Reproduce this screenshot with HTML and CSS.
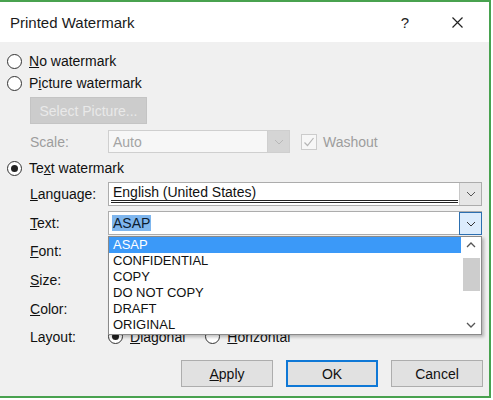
FILE: index.html
```html
<!DOCTYPE html>
<html>
<head>
<meta charset="utf-8">
<link rel="stylesheet" href="styles.css">
</head>
<body>
<div class="dialog">
  <div class="titlebar">
    <span class="title">Printed Watermark</span>
    <span class="help">?</span>
    <svg class="close" width="11" height="11" viewBox="0 0 11 11"><path d="M0.5 0.5 L10.5 10.5 M10.5 0.5 L0.5 10.5" stroke="#222" stroke-width="1.2" fill="none"/></svg>
  </div>
  <div class="content">
    <div class="radio-row r-first">
      <span class="radio"></span><span class="rtext"><u>N</u>o watermark</span>
    </div>
    <div class="radio-row">
      <span class="radio"></span><span class="rtext">P<u>i</u>cture watermark</span>
    </div>
    <div class="pic-row">
      <div class="btn-disabled">Select Picture...</div>
    </div>
    <div class="row r-scale">
      <span class="lbl disabled">Scale:</span>
      <div class="combo combo-disabled">
        <span class="field">Auto</span>
        <span class="dd dd-disabled"><svg width="10" height="6" viewBox="0 0 10 6"><path d="M1 1 L5 5 L9 1" stroke="#b8b8b8" fill="none"/></svg></span>
      </div>
      <span class="check"><svg width="14" height="14" viewBox="0 0 14 14"><path d="M2.5 7.5 L5.5 10.5 L11.5 3" stroke="#b5b5b5" stroke-width="1.2" fill="none"/></svg></span>
      <span class="disabled washout">Washout</span>
    </div>
    <div class="radio-row r-text">
      <span class="radio checked"></span><span class="rtext">Te<u>x</u>t watermark</span>
    </div>
    <div class="row r-lang">
      <span class="lbl"><u>L</u>anguage:</span>
      <div class="combo">
        <span class="field lang"><span class="langtext">English (United States)</span></span>
        <span class="dd"><svg width="10" height="6" viewBox="0 0 10 6"><path d="M1 1 L5 5 L9 1" stroke="#555" fill="none"/></svg></span>
      </div>
    </div>
    <div class="row r-textcombo">
      <span class="lbl"><u>T</u>ext:</span>
      <div class="combo combo-open">
        <span class="field"><span class="sel">ASAP</span></span>
        <span class="dd dd-active"><svg width="10" height="6" viewBox="0 0 10 6"><path d="M1 1 L5 5 L9 1" stroke="#333" fill="none"/></svg></span>
        <div class="list">
          <div class="items">
            <div class="item active">ASAP</div>
            <div class="item">CONFIDENTIAL</div>
            <div class="item">COPY</div>
            <div class="item">DO NOT COPY</div>
            <div class="item">DRAFT</div>
            <div class="item">ORIGINAL</div>
          </div>
          <div class="scroll">
            <svg class="arr" width="10" height="6" viewBox="0 0 10 6"><path d="M1 5 L5 1 L9 5" stroke="#555" stroke-width="1.3" fill="none"/></svg>
            <div class="thumb"></div>
            <div class="spacer"></div>
            <svg class="arr" width="10" height="6" viewBox="0 0 10 6"><path d="M1 1 L5 5 L9 1" stroke="#555" stroke-width="1.3" fill="none"/></svg>
          </div>
        </div>
      </div>
    </div>
    <div class="row r-font"><span class="lbl"><u>F</u>ont:</span></div>
    <div class="row r-size"><span class="lbl"><u>S</u>ize:</span></div>
    <div class="row r-color"><span class="lbl"><u>C</u>olor:</span></div>
    <div class="row r-layout">
      <span class="lbl">Layout:</span>
      <span class="radio checked"></span><span class="rtext"><u>D</u>iagonal</span>
      <span class="radio r-h"></span><span class="rtext"><u>H</u>orizontal</span>
    </div>
    <div class="buttons">
      <div class="btn"><u>A</u>pply</div>
      <div class="btn btn-default">OK</div>
      <div class="btn">Cancel</div>
    </div>
  </div>
</div>
</body>
</html>
```
FILE: styles.css
```css
html, body {
  margin: 0;
  padding: 0;
  background: #ffffff;
}
body {
  font-family: "Liberation Sans", Arial, sans-serif;
  font-size: 14px;
  color: #111;
}
.dialog {
  width: 491px;
  height: 398px;
  box-sizing: border-box;
  border-top: 2px solid #48a24f;
  border-right: 2px solid #48a24f;
  border-bottom: 2px solid #48a24f;
  background: #f0f0f0;
  box-shadow: 0 2px 0 #cfcfcf;
  position: relative;
  display: flex;
  flex-direction: column;
}
.titlebar {
  height: 40px;
  background: #ffffff;
  display: flex;
  align-items: center;
  flex-shrink: 0;
}
.title {
  font-size: 15px;
  margin-left: 10px;
  color: #1a1a1a;
}
.help {
  margin-left: auto;
  font-size: 15px;
  color: #222;
}
.close {
  margin-left: 43px;
  margin-right: 26px;
}
.content {
  display: flex;
  flex-direction: column;
  flex: 1;
}
.radio-row {
  display: flex;
  align-items: center;
  height: 22px;
  padding-left: 7px;
}
.r-first { margin-top: 8px; }
.radio {
  width: 15px;
  height: 15px;
  box-sizing: border-box;
  border: 1px solid #333;
  border-radius: 50%;
  background: #fff;
  flex-shrink: 0;
  position: relative;
}
.radio.checked::after {
  content: "";
  position: absolute;
  left: 3px;
  top: 3px;
  width: 7px;
  height: 7px;
  border-radius: 50%;
  background: #222;
}
.rtext {
  margin-left: 7px;
}
.pic-row {
  margin-top: 3px;
  padding-left: 30px;
  display: flex;
}
.btn-disabled {
  width: 117px;
  height: 27px;
  box-sizing: border-box;
  background: #cccccc;
  border: 1px solid #c4c4c4;
  color: #e9e9e9;
  display: flex;
  align-items: center;
  justify-content: center;
  font-size: 14px;
}
.row {
  display: flex;
  align-items: center;
  height: 24px;
  padding-left: 30px;
}
.lbl {
  width: 78px;
  flex-shrink: 0;
}
.disabled { color: #9d9d9d; }
.r-scale { margin-top: 6px; height: 23px; }
.combo {
  height: 24px;
  box-sizing: border-box;
  border: 1px solid #acacac;
  background: #fff;
  display: flex;
  width: 374px;
  position: relative;
}
.combo-disabled {
  width: 182px;
  height: 23px;
  border-color: #cfcfcf;
  background: #f7f7f7;
}
.field {
  flex: 1;
  display: flex;
  align-items: center;
  padding-left: 4px;
}
.combo-disabled .field { color: #a4a4a4; }
.dd {
  width: 21px;
  display: flex;
  align-items: center;
  justify-content: center;
  background: #e6e6e6;
  border-left: 1px solid #c8c8c8;
}
.dd-disabled {
  background: #d5d5d5;
  border-left: 1px solid #cfcfcf;
}
.dd-active {
  background: #dcecfc;
  border: 1px solid #2c6fb0;
  margin: 0 -1px -1px 0;
}
.check {
  width: 16px;
  height: 16px;
  box-sizing: border-box;
  border: 1px solid #cccccc;
  background: #f7f7f7;
  margin-left: 11px;
  display: flex;
  align-items: center;
  justify-content: center;
}
.washout { margin-left: 6px; }
.r-text { margin-top: 4px; }
.r-lang { margin-top: 3px; }
.lang {
  position: relative;
  padding-left: 4px;
}
.lang::after {
  content: "";
  position: absolute;
  left: 2px;
  right: 1px;
  bottom: 2px;
  border-bottom: 3px double #222;
}
.langtext { position: relative; top: -2px; }
.r-textcombo { margin-top: 5px; }
.sel {
  background: #7fb6ee;
  color: #0c1c30;
  padding: 0 1px;
  margin-left: -1px;
}
.list {
  position: absolute;
  left: -1px;
  top: calc(100% + 2px);
  width: 374px;
  height: 99px;
  box-sizing: border-box;
  border: 1px solid #8a8a8a;
  background: #fff;
  box-shadow: 2px 2px 3px rgba(0,0,0,0.25);
  display: flex;
  z-index: 5;
}
.items {
  flex: 1;
  display: flex;
  flex-direction: column;
}
.item {
  height: 16px;
  line-height: 16px;
  font-size: 13px;
  padding-left: 4px;
  color: #111;
}
.item.active {
  background: #3b99f8;
  color: #fff;
}
.scroll {
  width: 20px;
  display: flex;
  flex-direction: column;
  align-items: center;
  background: #fff;
}
.arr { margin-top: 5px; flex-shrink: 0; }
.scroll .arr:last-child { margin-top: 0; margin-bottom: 6px; }
.thumb {
  width: 17px;
  height: 33px;
  background: #cdcdcd;
  margin-top: 10px;
}
.spacer { flex: 1; }
.r-font { margin-top: 4px; }
.r-size { margin-top: 5px; }
.r-color { margin-top: 5px; }
.r-layout { margin-top: 4px; height: 23px; }
.r-h { margin-left: 20px; }
.buttons {
  margin-top: 12px;
  display: flex;
  padding-left: 181px;
  gap: 13px;
}
.btn {
  width: 92px;
  height: 27px;
  box-sizing: border-box;
  border: 1px solid #adadad;
  background: #e1e1e1;
  display: flex;
  align-items: center;
  justify-content: center;
  font-size: 14px;
  color: #111;
}
.btn-default {
  border: 2px solid #0f78d6;
}
```
